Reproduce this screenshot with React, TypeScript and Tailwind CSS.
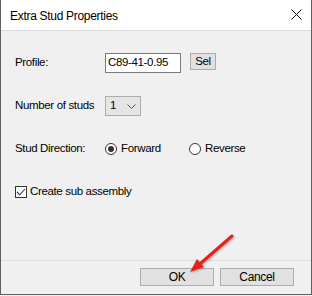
import React from 'react';

const font = { fontFamily: '"Liberation Sans", Arial, sans-serif' };

function Radio({ checked, label }: { checked?: boolean; label: string }) {
  return (
    <div className="flex items-center gap-[4px]">
      <span className="w-[12px] h-[12px] rounded-full border border-[#333] bg-white flex items-center justify-center">
        {checked && <span className="w-[6px] h-[6px] rounded-full bg-[#333]" />}
      </span>
      <span>{label}</span>
    </div>
  );
}

export default function App() {
  return (
    <div className="relative w-[312px] h-[296px] bg-[#f0f0f0] text-[11.5px] text-black tracking-[-0.35px]" style={font}>
      <div className="flex flex-col h-[295px] border-l border-r border-b border-[#5f5f5f]">
        {/* title bar */}
        <div className="h-[31px] bg-white flex items-center justify-between pl-[9px] pr-[9px] border-b border-[#dcdcdc] shrink-0">
          <span className="text-[12px] tracking-[-0.3px] mt-[1px]">Extra Stud Properties</span>
          <svg width="11" height="11" viewBox="0 0 11 11" className="mb-[1px]">
            <path d="M0.5 0.5 L10.5 10.5 M10.5 0.5 L0.5 10.5" stroke="#111" strokeWidth="1" />
          </svg>
        </div>

        {/* body */}
        <div className="flex-1 pl-[14px] pt-[22px] flex flex-col gap-[23px]">
          <div className="flex items-center h-[20px]">
            <span className="w-[90px]">Profile:</span>
            <div className="w-[76px] h-[20px] border border-[#7a7a7a] bg-white flex items-center pl-[2px]">C89-41-0.95</div>
            <button className="ml-[9px] w-[26px] h-[17px] mb-[3px] border border-[#adadad] bg-[#e1e1e1] flex items-center justify-center">Sel</button>
          </div>

          <div className="flex items-center h-[20px]">
            <span className="w-[90px]">Number of studs</span>
            <div className="w-[36px] h-[20px] border border-[#adadad] bg-[#e5e5e5] flex items-center justify-between pl-[4px] pr-[4px]">
              <span>1</span>
              <svg width="9" height="5" viewBox="0 0 9 5">
                <path d="M0.5 0.5 L4.5 4.5 L8.5 0.5" stroke="#555" strokeWidth="1" fill="none" />
              </svg>
            </div>
          </div>

          <div className="flex items-center h-[20px]">
            <span className="w-[90px]">Stud Direction:</span>
            <div className="w-[84px]">
              <Radio checked label="Forward" />
            </div>
            <Radio label="Reverse" />
          </div>

          <div className="flex items-center h-[20px] gap-[3px]">
            <span className="w-[12px] h-[12px] border border-[#333] bg-white flex items-center justify-center">
              <svg width="10" height="8" viewBox="0 0 10 8">
                <path d="M1 4 L3.8 6.8 L9 1" stroke="#333" strokeWidth="1.1" fill="none" />
              </svg>
            </span>
            <span>Create sub assembly</span>
          </div>
        </div>

        {/* footer */}
        <div className="h-[34px] border-t border-[#dfdfdf] shrink-0 flex justify-end items-start pt-[7px] pr-[17px] gap-[6px]">
          <button className="w-[74px] h-[18px] border border-[#adadad] bg-[#e1e1e1] flex items-center justify-center text-[12px]">OK</button>
          <button className="w-[74px] h-[18px] border border-[#adadad] bg-[#e1e1e1] flex items-center justify-center text-[12px]">Cancel</button>
        </div>
      </div>

      {/* red arrow annotation */}
      <svg className="absolute inset-0 pointer-events-none" width="312" height="296" viewBox="0 0 312 296">
        <defs>
          <filter id="sh" x="-20%" y="-20%" width="140%" height="140%">
            <feDropShadow dx="1" dy="1" stdDeviation="1" floodColor="#000" floodOpacity="0.3" />
          </filter>
        </defs>
        <g filter="url(#sh)">
          <path d="M232 236 L201 263" stroke="#e3201b" strokeWidth="3" strokeLinecap="round" />
          <path d="M190 272 L204 267 L197 259 Z" fill="#e3201b" />
        </g>
      </svg>
    </div>
  );
}
